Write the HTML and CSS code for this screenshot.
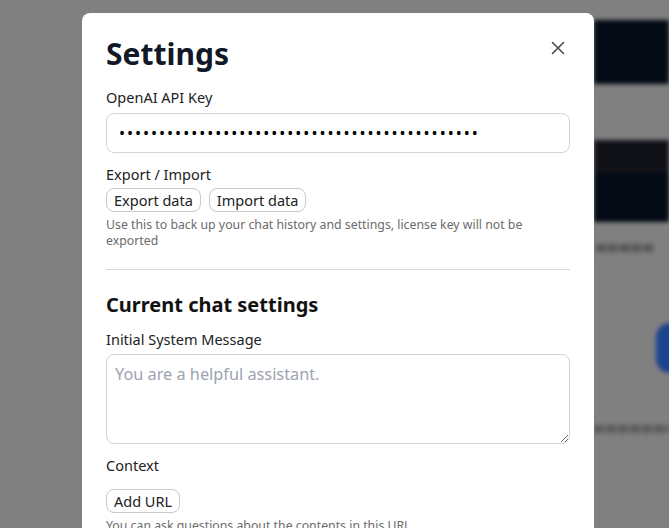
FILE: index.html
```html
<!DOCTYPE html>
<html>
<head>
<meta charset="utf-8">
<link rel="stylesheet" href="styles.css">
</head>
<body>
<div class="app">
  <div class="app-side">
    <div class="blk dark1"></div>
    <div class="blk gap1"></div>
    <div class="blk dark2"></div>
    <div class="blk txt1"></div>
    <div class="blk blue"></div>
    <div class="blk txt2"></div>
  </div>
</div>
<div class="modal">
  <button class="close" aria-label="Close">
    <svg width="14" height="14" viewBox="0 0 14 14"><path d="M1.5 1.5 L12.5 12.5 M12.5 1.5 L1.5 12.5" stroke="#4b4b4b" stroke-width="1.6" stroke-linecap="round"/></svg>
  </button>
  <h1 class="title">Settings</h1>
  <div class="field">
    <label class="label">OpenAI API Key</label>
    <input class="input" type="password" value="sk-xxxxxxxxxxxxxxxxxxxxxxxxxxxxxxxxxxxxxxxxxx">
  </div>
  <div class="field">
    <label class="label">Export / Import</label>
    <div class="btns">
      <button class="btn">Export data</button>
      <button class="btn">Import data</button>
    </div>
    <p class="help">Use this to back up your chat history and settings, license key will not be exported</p>
  </div>
  <hr class="divider">
  <h2 class="subtitle">Current chat settings</h2>
  <div class="field">
    <label class="label label-first">Initial System Message</label>
    <textarea class="textarea" placeholder="You are a helpful assistant."></textarea>
  </div>
  <div class="field">
    <label class="label label-ctx">Context</label>
    <div class="btns btns-ctx">
      <button class="btn">Add URL</button>
    </div>
    <p class="help">You can ask questions about the contents in this URL</p>
  </div>
</div>
</body>
</html>
```
FILE: styles.css
```css
html, body {
  margin: 0;
  padding: 0;
  height: 100%;
  overflow: hidden;
}
body {
  background: #808080;
  font-family: "Noto Sans", "Open Sans", "Noto Sans CJK SC", sans-serif;
  color: #1f1f1f;
}
.app {
  display: flex;
  justify-content: flex-end;
  height: 100%;
}
.app-side {
  width: 75px;
  display: flex;
  flex-direction: column;
  filter: blur(2px);
}
.blk { flex: none; }
.dark1 { margin-top: 20px; height: 64px; background: #030a14; }
.gap1 { height: 56px; }
.dark2 { height: 82px; background: linear-gradient(#111218 0 40%, #030a14 40% 100%); }
.txt1 { margin: 22px 0 0 2px; height: 8px; width: 58px; background: repeating-linear-gradient(90deg, #555 0 9px, #6e6e6e 9px 12px); filter: blur(1px); }
.blue { margin: 71px 0 0 62px; width: 40px; height: 50px; border-radius: 14px; background: #1e4490; }
.txt2 { margin: 52px 0 0 0; height: 8px; width: 75px; background: repeating-linear-gradient(90deg, #595959 0 9px, #707070 9px 12px); filter: blur(1px); }

.modal {
  position: absolute;
  left: 82px;
  top: 13px;
  width: 464px;
  height: 540px;
  padding: 24px 24px 0;
  background: #fff;
  border-radius: 8px;
}
.close {
  position: absolute;
  right: 29px;
  top: 28px;
  width: 14px;
  height: 14px;
  padding: 0;
  border: 0;
  background: none;
  display: flex;
}
.title {
  margin: 0;
  font-size: 30px;
  line-height: 34px;
  font-weight: 700;
  color: #111827;
}
.field {
  display: flex;
  flex-direction: column;
}
.label {
  font-size: 14.5px;
  line-height: 20px;
  color: #222;
  margin-top: 16px;
}
.input {
  margin-top: 6px;
  height: 40px;
  box-sizing: border-box;
  border: 1px solid #d4d4d4;
  border-radius: 8px;
  padding: 0 12px;
  font-size: 16px;
  letter-spacing: 2px;
  font-family: inherit;
  color: #000;
  outline: none;
}
.btns {
  display: flex;
  gap: 8px;
  margin-top: 4px;
}
.btn {
  height: 24px;
  padding: 0 7px;
  box-sizing: border-box;
  border: 1px solid #c9c9c9;
  border-radius: 8px;
  background: #fff;
  font-family: inherit;
  font-size: 14.5px;
  line-height: 20px;
  color: #222;
}
.help {
  margin: 5px 0 0;
  font-size: 12.3px;
  line-height: 16px;
  color: #6b6b6b;
}
.field + .field .label { margin-top: 11px; }
.divider {
  margin: 20px 0 0;
  border: 0;
  border-top: 1px solid #d6d6d6;
}
.subtitle {
  margin: 22px 0 0;
  font-size: 20px;
  line-height: 26px;
  font-weight: 700;
  color: #111;
}
.field .label-first { margin-top: 11px; }
.textarea {
  margin-top: 5px;
  height: 90px;
  box-sizing: border-box;
  border: 1px solid #d4d4d4;
  border-radius: 8px;
  padding: 8px;
  font-family: inherit;
  font-size: 16.3px;
  resize: vertical;
  outline: none;
}
.textarea::placeholder { color: #9ca3af; }
.field + .field .label-ctx { margin-top: 11px; }
.btns-ctx { margin-top: 14px; }
```
